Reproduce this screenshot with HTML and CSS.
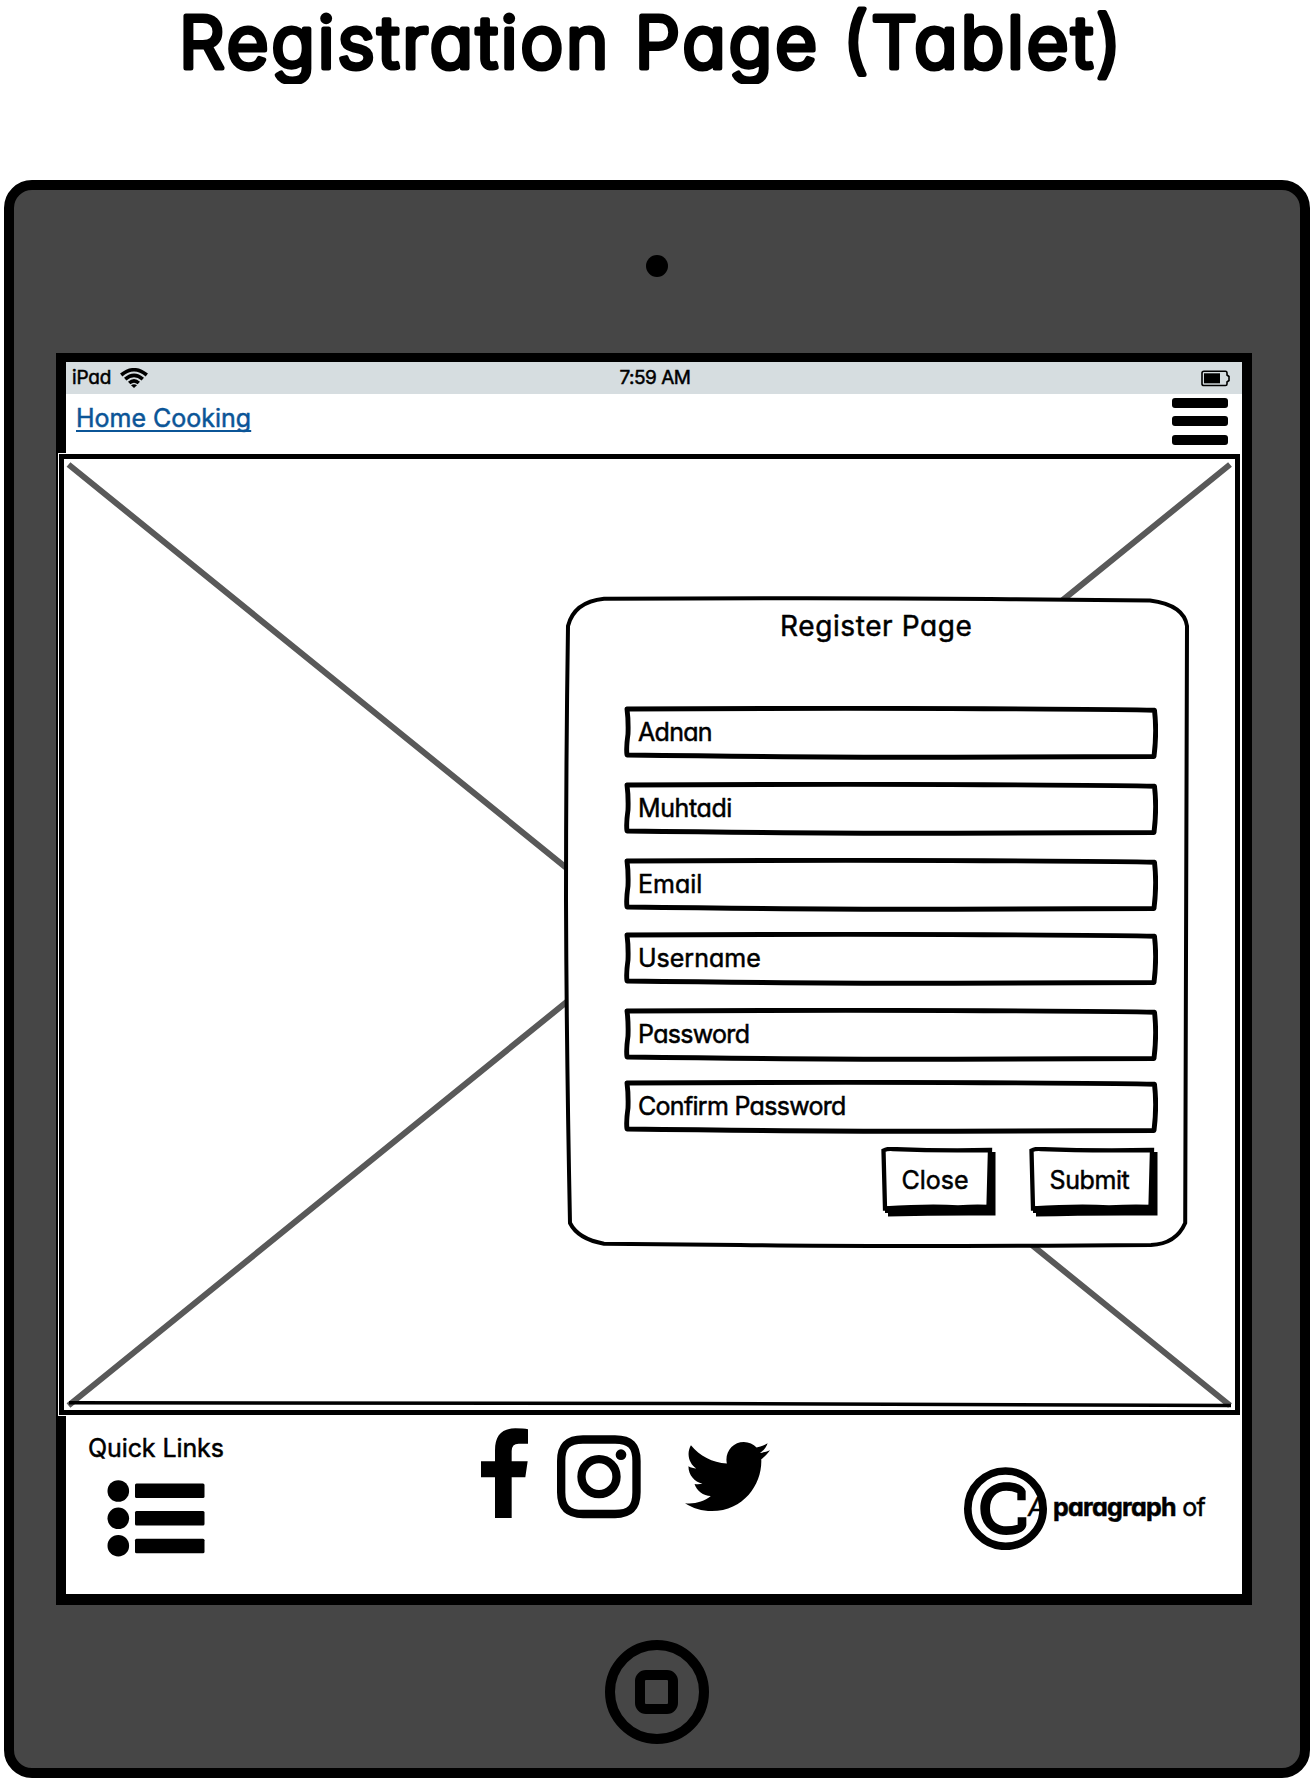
FILE: index.html
```html
<!DOCTYPE html>
<html lang="en">
<head>
<meta charset="utf-8">
<title>Registration Page (Tablet)</title>
<link rel="stylesheet" href="styles.css">
</head>
<body>
<svg class="defs" width="0" height="0">
  <symbol id="field-outline" viewBox="0 0 534 54">
    <path d="M3 3Q200 2 360 2.700T530.500 4.300Q533 26 530 50.500Q400 50.600 330 51.200Q200 51.600 3 49Q2 42 4 28Q4.500 14 3 3Z" fill="#fff" stroke="#000" stroke-width="4.900" stroke-linejoin="round"/>
  </symbol>
</svg>
<h1 class="title">
  <svg width="1314" height="84"><text x="179" y="68" textLength="942" lengthAdjust="spacing">Registration Page (Tablet)</text></svg>
</h1>
<main class="tablet">
  <div class="camera"></div>
  <div class="screen">
    <div class="status">
      <div class="carrier"><span>iPad</span>
        <svg width="28" height="20" viewBox="0 0 28 20" fill="none" stroke="#000" stroke-width="3.600"><path d="M1.200 7Q14-3.500 26.800 7"/><path d="M5.200 11.200Q14 3.600 22.800 11.200"/><path d="M9.200 15Q14 10.800 18.800 15"/><path d="M11 17.300Q14 15 17 17.300L14 20Z" fill="#000" stroke="none"/></svg>
      </div>
      <span class="clock">7:59 AM</span>
      <svg class="battery" width="29" height="17" viewBox="0 0 29 17"><path d="M3 1.200H24.500Q26 1.200 26 3V5L28 6.500V10.500L26 12V14Q26 15.500 24.500 15.500H3Q1 15.500 1 14V3Q1 1.200 3 1.200Z" fill="none" stroke="#000" stroke-width="1.600"/><path d="M3 3.300H19V13.300H3Z"/></svg>
    </div>
    <nav class="navbar">
      <a class="brand">Home Cooking</a>
      <div class="menu"><i></i><i></i><i></i></div>
    </nav>
    <section class="hero">
      <svg class="cross" width="1183" height="963" viewBox="58 453 1183 963">
        <path d="M68.500 464.500L1230 1405.500M68.500 1405.500L1230 464.500" stroke="#595959" stroke-width="6"/>
        <path d="M69 1402.700Q400 1402.500 700 1403.500T1231 1405.500" fill="none" stroke="#000" stroke-width="3.600"/>
      </svg>
      <form class="dialog">
        <svg class="dialog-outline" width="626" height="652" viewBox="564 596 626 652">
          <path d="M604 598.800Q880 597.600 1010 599.300L1150 600.500Q1184 605 1187 626Q1187.500 900 1185.200 1223Q1176 1244 1151 1245Q880 1247 740 1245L604 1243.700Q578 1239 570 1223Q566.500 1050 566 900Q566 760 568 626Q574 602 604 598.800Z" fill="#fff" stroke="#000" stroke-width="4" stroke-linejoin="round"/>
        </svg>
        <div class="dialog-body">
          <h2>Register Page</h2>
          <div class="field"><svg><use href="#field-outline"/></svg><span>Adnan</span></div>
          <div class="field"><svg><use href="#field-outline"/></svg><span class="loose">Muhtadi</span></div>
          <div class="field tight"><svg><use href="#field-outline"/></svg><span class="looser">Email</span></div>
          <div class="field"><svg><use href="#field-outline"/></svg><span class="looser">Username</span></div>
          <div class="field tighter"><svg><use href="#field-outline"/></svg><span>Password</span></div>
          <div class="field last"><svg><use href="#field-outline"/></svg><span>Confirm Password</span></div>
          <div class="actions">
            <div class="button">
              <svg width="115" height="70" viewBox="0 0 115 70"><path d="M7 64H108V5H114.500V68.500Q60 68 7 69.500Z"/><path d="M2.500 3.500Q6 1.500 12 2Q60 4 109 3L107.500 60Q95 59 77 60.500Q50 58.500 4 61.500Z" fill="#fff" stroke="#000" stroke-width="4.300"/><path d="M4 59.500L108 60V66H4Z"/></svg>
              <span class="looser">Close</span>
            </div>
            <div class="button">
              <svg width="129" height="70" viewBox="0 0 129 70"><path d="M7 64H122V5H128.500V68.500Q60 68 7 69.500Z"/><path d="M2.500 3.500Q6 1.500 12 2Q60 4 123 3L121.500 60Q105 59 80 60.500Q50 58.500 4 61.500Z" fill="#fff" stroke="#000" stroke-width="4.300"/><path d="M4 59.500L122 60V66H4Z"/></svg>
              <span class="loose">Submit</span>
            </div>
          </div>
        </div>
      </form>
    </section>
    <footer class="footer">
      <div class="links">
        <span>Quick Links</span>
        <svg width="98" height="77" viewBox="107 1480 98 77"><circle cx="118.300" cy="1491" r="10.800"/><circle cx="118.300" cy="1518.300" r="10.800"/><circle cx="118.300" cy="1545.700" r="10.800"/><rect x="135" y="1483.500" width="69.500" height="14.500" rx="1.500"/><rect x="135" y="1511" width="69.500" height="14.500" rx="1.500"/><rect x="135" y="1538.700" width="69.500" height="14.500" rx="1.500"/></svg>
      </div>
      <div class="social">
        <svg width="48" height="91" viewBox="62 83 144 273"><path d="M104 353V231H62V183H104V150C104 105 125 84 165 84Q190 84 203 87V130H175Q154 130 154 152V183H202L195 231H154V353Z"/></svg>
        <svg class="instagram" width="84" height="84" viewBox="292 104 252 252" fill="none" stroke="#000" stroke-width="25"><path d="M370 117.500H466C512 117.500 530.500 136 530.500 182V276C530.500 322 512 341 466 341H370C324 341 304.500 322 304.500 276V182C304.500 136 324 117.500 370 117.500Z"/><circle cx="418" cy="229" r="52.500"/><circle cx="484" cy="163" r="16" fill="#000" stroke="none"/></svg>
        <svg class="twitter" width="85" height="85" viewBox="0 0 512 512"><path d="M459.370 151.716c.325 4.548.325 9.097.325 13.645 0 138.720-105.583 298.558-298.558 298.558-59.452 0-114.680-17.219-161.137-47.106 8.447.974 16.568 1.299 25.340 1.299 49.055 0 94.213-16.568 130.274-44.832-46.132-.975-84.792-31.188-98.112-72.772 6.498.974 12.995 1.624 19.818 1.624 9.421 0 18.843-1.300 27.614-3.573-48.081-9.747-84.143-51.980-84.143-102.985v-1.299c13.969 7.797 30.214 12.670 47.431 13.319-28.264-18.843-46.781-51.005-46.781-87.391 0-19.492 5.197-37.360 14.294-52.954 51.655 63.675 129.300 105.258 216.365 109.807-1.624-7.797-2.599-15.918-2.599-24.040 0-57.828 46.782-104.934 104.934-104.934 30.213 0 57.502 12.670 76.670 33.137 23.715-4.548 46.456-13.320 66.599-25.340-7.798 24.366-24.366 44.833-46.132 57.827 21.117-2.273 41.584-8.122 60.426-16.243-14.292 20.791-32.161 39.308-52.628 54.253z"/></svg>
      </div>
      <div class="legal">
        <svg width="83" height="83" viewBox="101 260 249 249"><circle cx="225.500" cy="385" r="113" fill="none" stroke="#000" stroke-width="23"/><path d="M261 360V338Q245 331 228 331C198 331 179 352 179 385C179 418 198 438 228 438Q245 438 262 433V411H288V435C285 455 258 464 228 464C182 464 150 432 150 385C150 338 182 306 228 306C258 306 280 315 286 332V360Z"/></svg>
        <p><em>A</em> <strong>paragraph</strong> <span>of</span></p>
      </div>
    </footer>
  </div>
  <div class="home"><div></div></div>
</main>
</body>
</html>
```
FILE: styles.css
```css
* { box-sizing: border-box; }
body {
  margin: 0;
  background: #fff;
  color: #000;
  font-family: Inter, "Liberation Sans", sans-serif;
  font-feature-settings: "cv11";
  font-size: 25px;
  line-height: 30px;
  -webkit-text-stroke: 0.5px;
}
svg { display: block; flex: none; }
.defs { position: absolute; }
.title {
  margin: 0;
  height: 84px;
  font-size: 72px;
  line-height: 84px;
  font-weight: 300;
  white-space: nowrap;
  -webkit-text-stroke: 0;
}
.title text {
  fill: #000;
  stroke: #000;
  stroke-width: 5px;
  stroke-linejoin: round;
}
.tablet {
  width: 1306px;
  height: 1598px;
  margin: 96px 0 0 4px;
  background: #464646;
  border: 10px solid #000;
  border-radius: 28px;
  display: flex;
  flex-direction: column;
  align-items: center;
}
.camera {
  width: 22px;
  height: 22px;
  margin-top: 65px;
  border-radius: 50%;
  background: #000;
}
.screen {
  width: 1196px;
  height: 1252px;
  margin: 76px 0 0 -6px;
  border: solid #000;
  border-width: 9px 10px 11px;
  background: #fff;
}
.status {
  display: grid;
  grid-template-columns: 1fr auto 1fr;
  align-items: center;
  height: 32px;
  padding: 0 12px 0 6px;
  background: #d6dde0;
  font-size: 19px;
}
.carrier { display: flex; align-items: center; gap: 9px; letter-spacing: -0.2px; }
.clock { letter-spacing: -0.5px; margin-left: 8px; }
.battery { justify-self: end; }
.navbar {
  display: flex;
  justify-content: space-between;
  height: 60px;
  padding: 3.500px 14.500px 0 10px;
}
.brand {
  height: 34px;
  padding: 5px 0 0;
  color: #0b5597;
  text-decoration: underline;
  text-decoration-thickness: 2px;
  text-underline-offset: 3px;
  text-decoration-skip-ink: none;
}
.menu { display: flex; flex-direction: column; gap: 8.500px; }
.menu i { width: 56px; height: 10px; border-radius: 3px; background: #000; }
.hero {
  display: grid;
  width: 1182px;
  height: 962px;
  margin-left: -8px;
  background: #fff;
  border: 1px solid #999;
}
.cross {
  grid-area: 1 / 1;
  margin: -2px 0 0 -1px;
  background: #fff;
  outline: 5px solid #000;
  outline-offset: -6px;
}
.dialog {
  grid-area: 1 / 1;
  display: grid;
  width: 626px;
  height: 652px;
  margin: 141px 0 0 505px;
}
.dialog-outline, .dialog-body { grid-area: 1 / 1; }
.dialog-body {
  display: flex;
  flex-direction: column;
  padding: 12px 32px 0 60px;
}
.dialog h2 {
  margin: 0 0 62px;
  padding-left: 156px;
  font-size: 28px;
  line-height: 36px;
  font-weight: 400;
  letter-spacing: 0.6px;
}
.field, .button { display: grid; flex: none; }
.field > *, .button > * { grid-area: 1 / 1; }
.field { width: 534px; height: 54px; margin-bottom: 22px; }
.field svg { width: 534px; height: 54px; }
.field span { padding: 11px 0 0 14px; letter-spacing: -0.7px; }
.tight { margin-bottom: 20px; }
.tighter { margin-bottom: 18px; }
.last { margin-bottom: 13px; }
.actions { display: flex; justify-content: flex-end; gap: 33px; }
.button span { padding: 18px 0 0 20.500px; }
.field .loose, .button .loose { letter-spacing: -0.4px; }
.field .looser, .button .looser { letter-spacing: 0; }
.footer {
  display: flex;
  height: 178px;
}
.links { width: 415px; padding: 17px 0 0 22px; letter-spacing: -0.1px; }
.links svg { margin: 17px 0 0 19px; }
.social { display: flex; width: 483px; padding-top: 12px; }
.instagram { margin: 7px 0 0 28px; }
.twitter { margin: 5.500px 0 0 44px; }
.legal { display: flex; padding-top: 51px; }
.legal p { margin: 24.500px 0 0 -19px; white-space: nowrap; letter-spacing: -0.7px; }
.legal em { margin-right: 2px; }
.home {
  display: grid;
  place-items: center;
  width: 104px;
  height: 104px;
  margin-top: 35px;
  border: 10px solid #000;
  border-radius: 50%;
}
.home div { width: 43px; height: 44px; margin-right: 1px; border: 10px solid #000; border-radius: 11px; }
```
